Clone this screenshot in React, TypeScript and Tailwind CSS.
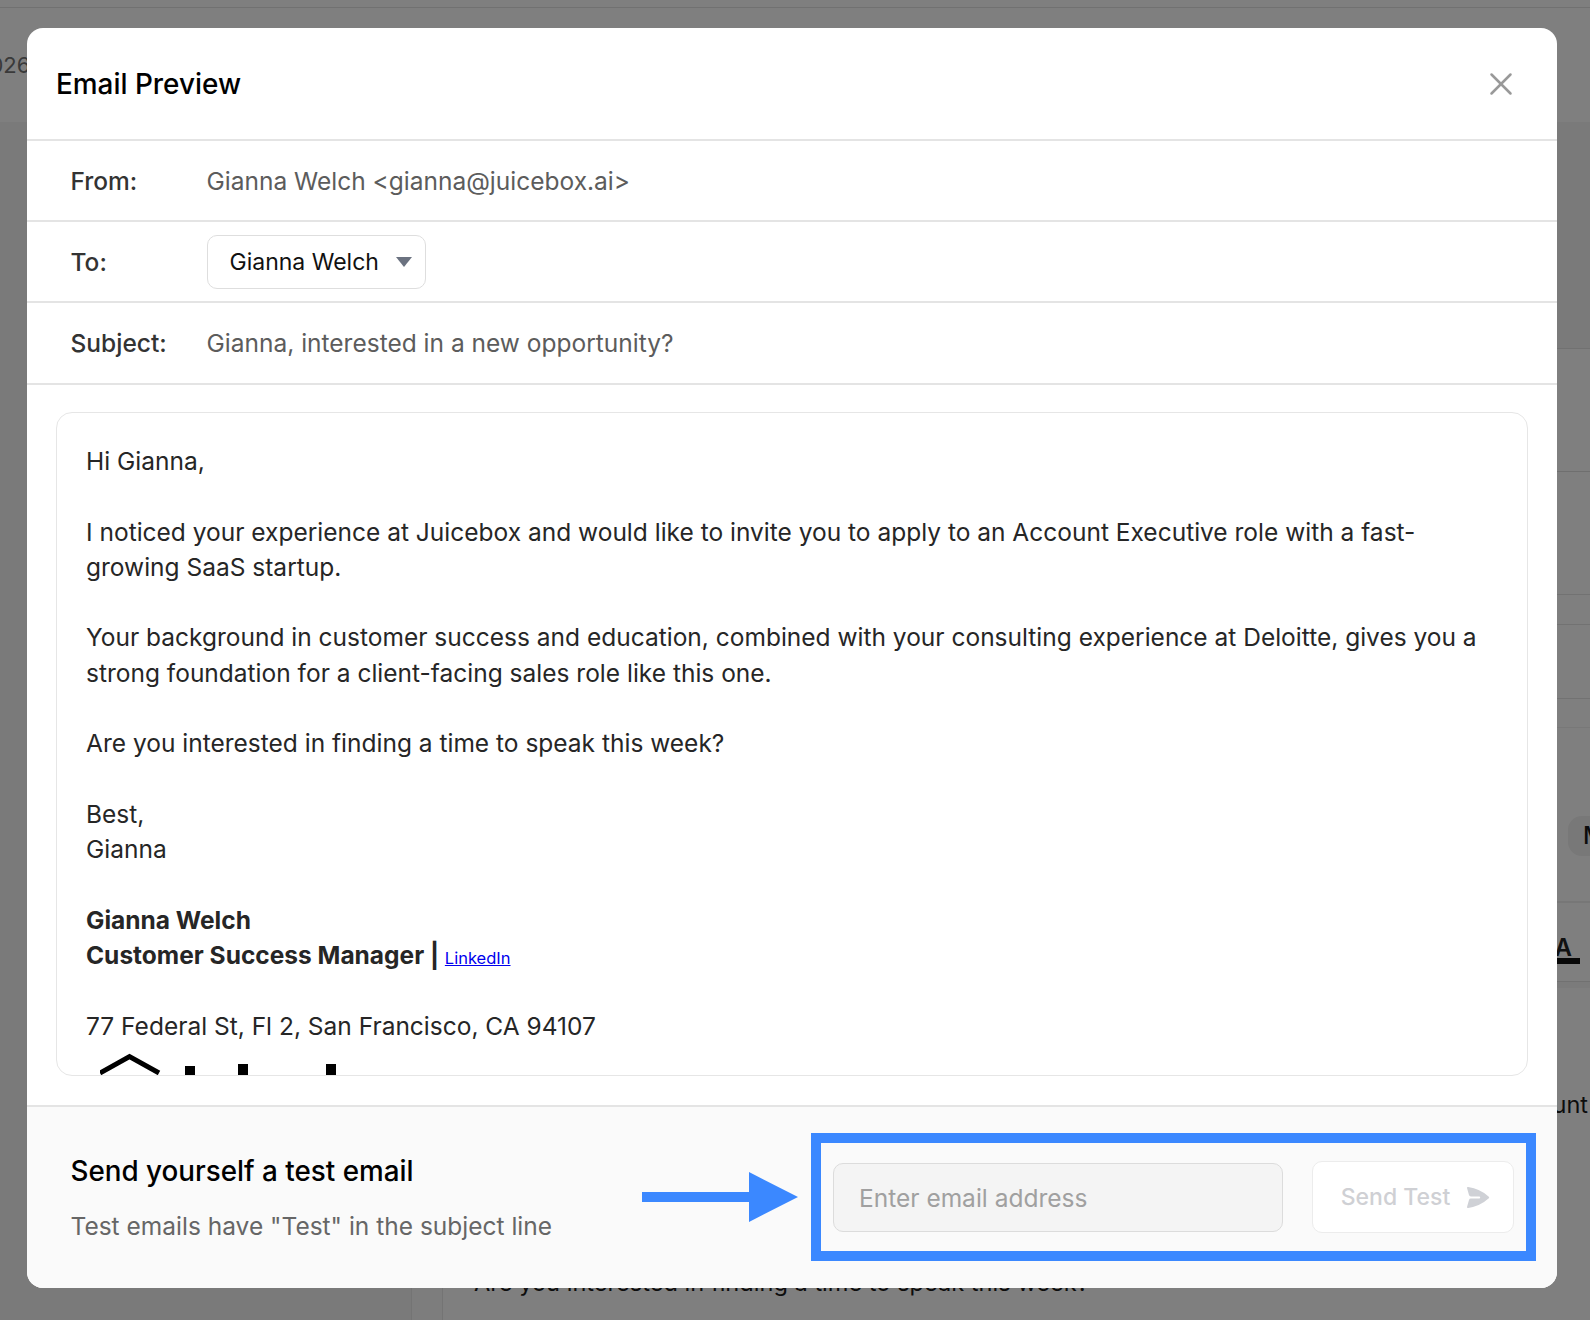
import { X } from 'lucide-react';

const font = { fontFamily: 'Inter, "Noto Sans", sans-serif' };

function BackgroundPage() {
  return (
    <div className="flex h-[1320px] w-[1590px] flex-col overflow-hidden bg-white text-[#1a1a1a]">
      <div className="h-[8px] shrink-0 border-b border-[#e2e2e2]" />
      <div className="flex h-[114px] shrink-0 items-center text-[22px] text-[#747474]">
        <span className="-ml-[24px] mt-[1px]">2026</span>
      </div>
      <div className="flex min-h-0 flex-1">
        <div className="w-[412px] shrink-0 border-r border-[#e8e8e8] bg-[#f5f5f5]" />
        <div className="w-[31px] shrink-0 border-r border-[#e8e8e8] bg-[#fbfbfb]" />
        <div className="flex min-w-0 flex-1 flex-col">
          <div className="h-[227px] shrink-0 border-b border-[#e2e2e2] bg-[#f5f5f5]" />
          <div className="h-[123px] shrink-0 border-b border-[#dedede]" />
          <div className="h-[123px] shrink-0 border-b border-[#e5e5e5]" />
          <div className="h-[30px] shrink-0 border-b border-[#e5e5e5]" />
          <div className="h-[74px] shrink-0 border-b border-[#e5e5e5]" />
          <div className="h-[29px] shrink-0 border-b border-[#f0f0f0]" />
          <div className="flex h-[175px] shrink-0 items-center justify-end border-b-2 border-[#eeeeee] pt-[42px]">
            <span className="flex h-[40px] w-[22px] items-center rounded-l-[14px] bg-[#f0f0f0] pl-[15px] text-[24px] font-medium">M</span>
          </div>
          <div className="flex h-[79px] shrink-0 items-end justify-end border-b border-[#e2e2e2] pb-[17px]">
            <span className="mr-[10px] w-[60px] border-b-[6px] border-[#111] pr-[8px] text-right text-[24px] leading-[20px] font-semibold text-[#222]">A</span>
          </div>
          <div className="flex min-h-0 flex-1 flex-col bg-[#ffffff]">
            <div className="h-[6px] shrink-0 bg-[#f6f6f6]" />
            <div className="mt-[102px] flex justify-end pr-[2px] text-[23.5px] leading-[30px] whitespace-nowrap">
              <span>account</span>
            </div>
            <div className="mt-[145px] pl-[31px] text-[23.6px] leading-[35px] whitespace-nowrap">
              Are you interested in finding a time to speak this week?
            </div>
          </div>
        </div>
      </div>
    </div>
  );
}

function MetaRow({ label, children, last }: { label: string; children: React.ReactNode; last?: boolean }) {
  return (
    <div className={`flex shrink-0 items-center border-b-2 border-[#e4e4e4] pl-[43.5px] ${last ? 'h-[82px]' : 'h-[81px] pt-[2px]'}`}>
      <span className="w-[136px] shrink-0 font-medium text-[#333]">{label}</span>
      {children}
    </div>
  );
}

function EmailBody() {
  return (
    <div className="relative h-[664px] shrink-0 overflow-hidden rounded-[16px] border-[1.5px] border-[#e6e6e6] bg-white pl-[29.5px] pr-[40px] pt-[31px] leading-[35.3px] text-[#262626]">
      <p>Hi Gianna,</p>
      <br />
      <p>I noticed your experience at Juicebox and would like to invite you to apply to an Account Executive role with a fast-growing SaaS startup.</p>
      <br />
      <p>Your background in customer success and education, combined with your consulting experience at Deloitte, gives you a strong foundation for a client-facing sales role like this one.</p>
      <br />
      <p>Are you interested in finding a time to speak this week?</p>
      <br />
      <p>Best,</p>
      <p>Gianna</p>
      <br />
      <p className="font-bold">Gianna Welch</p>
      <p className="h-[35.3px] font-bold">
        Customer Success Manager |{' '}
        <a href="#" className="text-[16.5px] leading-none font-normal text-[#0000ee] underline">LinkedIn</a>
      </p>
      <br />
      <p>77 Federal St, Fl 2, San Francisco, CA 94107</p>
      <svg className="mt-[7px] ml-[14px] block" width="250" height="60" viewBox="0 0 250 60">
        <path d="M0 22 L29.5 5.5 L59 22" fill="none" stroke="#000" strokeWidth="5" />
        <rect x="85" y="15" width="10" height="30" />
        <rect x="138" y="13" width="10" height="30" />
        <rect x="226" y="13" width="10" height="30" />
      </svg>
    </div>
  );
}

export default function App() {
  return (
    <div className="relative h-[1320px] w-[1590px] overflow-hidden text-[24.5px]" style={font}>
      <BackgroundPage />
      <div className="absolute inset-0 bg-black/50 pl-[27px] pt-[28px]">
        <div className="flex h-[1260px] w-[1530px] flex-col overflow-hidden rounded-[16px] bg-white">
          <div className="flex h-[113px] shrink-0 items-center justify-between border-b-2 border-[#e4e4e4] pl-[29px] pr-[37px]">
            <h2 className="mt-[2px] text-[27.9px] font-medium text-black">Email Preview</h2>
            <X size={38} strokeWidth={1.6} className="text-[#999]" />
          </div>
          <MetaRow label="From:">
            <span className="text-[#5c5c5c]">Gianna Welch &lt;gianna@juicebox.ai&gt;</span>
          </MetaRow>
          <MetaRow label="To:">
            <div className="-mt-[1px] flex h-[54px] w-[219px] items-center justify-between rounded-[10px] border border-[#dedede] bg-white pl-[22px] pr-[13px] text-[23px] text-[#111]">
              <span>Gianna Welch</span>
              <svg width="16" height="10" viewBox="0 0 16 10"><path d="M0 0h16L8 10z" fill="#6b7280" /></svg>
            </div>
          </MetaRow>
          <MetaRow label="Subject:" last>
            <span className="text-[#5c5c5c]">Gianna, interested in a new opportunity?</span>
          </MetaRow>
          <div className="flex min-h-0 flex-1 flex-col pl-[28.5px] pr-[29.5px] pt-[27px]">
            <EmailBody />
          </div>
          <div className="flex h-[183px] shrink-0 items-center justify-between border-t-2 border-[#e4e4e4] bg-[#fafafa] pl-[43.5px] pr-[21px]">
            <div className="pt-[2px]">
              <div className="text-[27.8px] font-medium leading-[36px] text-black">Send yourself a test email</div>
              <div className="mt-[19px] leading-[36px] text-[#666]">Test emails have "Test" in the subject line</div>
            </div>
            <div className="mb-[1px] flex items-center gap-[13px]">
              <svg width="156" height="50" viewBox="0 0 156 50" className="shrink-0">
                <path d="M0 20h107V0l49 25-49 25V30H0z" fill="#3b88ff" />
              </svg>
              <div className="flex h-[128px] w-[725px] items-center gap-[29px] border-[10px] border-[#3b88ff] px-[12px]">
                <input
                  disabled
                  placeholder="Enter email address"
                  className="h-[69px] w-[450px] rounded-[10px] border border-[#dcdcdc] bg-[#f4f4f4] pl-[25px] pt-[1px] placeholder:text-[#a0a0a0]"
                />
                <button className="flex h-[72px] w-[202px] items-center justify-center gap-[14px] rounded-[10px] border border-[#ececec] bg-white pl-[6px] text-[23px] font-medium text-[#cfd0d4]">
                  Send Test
                  <svg width="27" height="27" viewBox="0 0 20 20" fill="#cfd1d6">
                    <path d="M3.105 2.289a.75.75 0 00-.826.95l1.414 4.925A1.5 1.5 0 005.135 9.25h6.115a.75.75 0 010 1.5H5.135a1.5 1.5 0 00-1.442 1.086l-1.414 4.926a.75.75 0 00.826.95 28.896 28.896 0 0015.293-7.154.75.75 0 000-1.115A28.897 28.897 0 003.105 2.289z" />
                  </svg>
                </button>
              </div>
            </div>
          </div>
        </div>
      </div>
    </div>
  );
}
